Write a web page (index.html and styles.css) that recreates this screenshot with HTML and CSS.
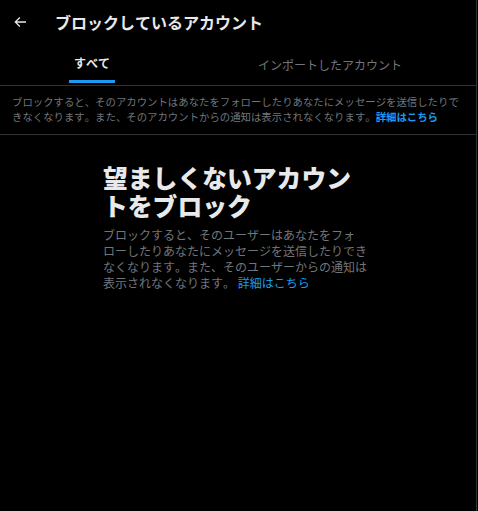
FILE: index.html
```html
<!DOCTYPE html>
<html lang="ja">
<head>
    <meta charset="UTF-8">
    <meta name="viewport" content="width=device-width, initial-scale=1.0">
    <title>ブロックしているアカウント</title>
    <link rel="stylesheet" href="styles.css">
</head>
<body>
    <main class="column">
        <!-- Header -->
        <div class="header">
            <button class="back-btn" aria-label="戻る">
                <svg viewBox="0 0 24 24" width="16" height="16"><path d="M7.414 13l5.043 5.04-1.414 1.42L3.586 12l7.457-7.46 1.414 1.42L7.414 11H21v2H7.414z"/></svg>
            </button>
            <h1 class="title">ブロックしているアカウント</h1>
        </div>

        <!-- Tabs -->
        <nav class="tabs">
            <a class="tab active" href="#"><span>すべて</span></a>
            <a class="tab" href="#"><span>インポートしたアカウント</span></a>
        </nav>

        <div class="info">
            ブロックすると、そのアカウントはあなたをフォローしたりあなたにメッセージを送信したりできなくなります。また、そのアカウントからの通知は表示されなくなります。<a class="link bold" href="#">詳細はこちら</a>
        </div>

        <!-- Empty state -->
        <div class="empty">
            <h2>望ましくないアカウントをブロック</h2>
            <p>ブロックすると、そのユーザーはあなたをフォローしたりあなたにメッセージを送信したりできなくなります。また、そのユーザーからの通知は表示されなくなります。 <a class="link" href="#">詳細はこちら</a></p>
        </div>
    </main>
</body>
</html>
```

FILE: styles.css
```css
html, body {
    margin: 0;
    background: #000;
}
body {
    font-family: "Noto Sans CJK JP", "Liberation Sans", sans-serif;
    color: #e7e9ea;
    font-kerning: none;
    text-spacing-trim: space-all;
    line-break: strict;
}
.column {
    width: 476px;
    min-height: 511px;
    border-right: 1px solid #2f3336;
}
.header {
    height: 43px;
    display: flex;
    align-items: center;
    padding: 0 12px;
}
.back-btn {
    background: none;
    border: none;
    padding: 0;
    width: 16px;
    height: 16px;
    margin-right: 27px;
    fill: #e7e9ea;
    cursor: pointer;
}
.back-btn svg {
    display: block;
}
.title {
    margin: 0;
    font-size: 16px;
    font-weight: 700;
    line-height: 20px;
}
.tabs {
    display: flex;
    height: 42px;
    border-bottom: 1px solid #2f3336;
}
.tab {
    flex: 1 1 auto;
    display: flex;
    justify-content: center;
    padding: 0 16px;
    color: #71767b;
    text-decoration: none;
    font-size: 12px;
}
.tab span {
    display: flex;
    align-items: center;
    box-sizing: border-box;
    height: 40px;
    padding: 3px 5px 0;
    line-height: 16px;
}
.tab.active {
    color: #e7e9ea;
    font-weight: 700;
}
.tab.active span {
    border-bottom: 3px solid #1d9bf0;
}
.info {
    padding: 8px 12px 10px;
    font-size: 10.4px;
    line-height: 15px;
    color: #71767b;
    border-bottom: 1px solid #2f3336;
}
.link {
    color: #1d9bf0;
    text-decoration: none;
}
.link.bold {
    font-weight: 700;
}
.empty {
    box-sizing: border-box;
    max-width: 270px;
    margin: 0 auto;
    padding: 28px 4px 28px 0;
}
.empty h2 {
    margin: 0 0 8px;
    font-size: 24.8px;
    line-height: 28px;
    font-weight: 800;
}
.empty p {
    margin: 0;
    font-size: 12px;
    line-height: 16px;
    color: #71767b;
}
```
